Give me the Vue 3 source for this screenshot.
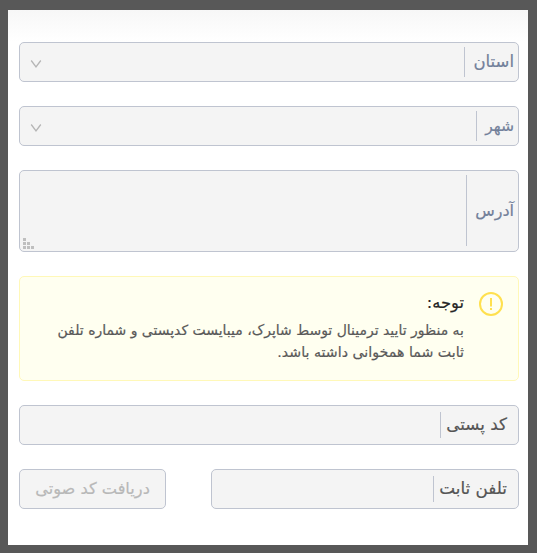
<template>
  <div class="backdrop">
    <form class="panel" dir="rtl" @submit.prevent>
      <div v-for="item in selects" :key="item.name" class="field">
        <label class="label" :class="item.name">{{ item.label }}</label>
        <div class="value"></div>
        <svg class="arrow" width="12" height="10" viewBox="0 0 12 10">
          <path d="M1.2 1.5 6 7.9l4.8-6.4" />
        </svg>
      </div>

      <div class="field area">
        <label class="label address">آدرس</label>
        <div class="value"></div>
        <svg class="grip" width="11" height="11" viewBox="0 0 11 11">
          <path d="M0 0h3v3H0zM0 4h3v3H0zM4 4h3v3H4zM0 8h3v3H0zM4 8h3v3H4zM8 8h3v3H8z" />
        </svg>
      </div>

      <div class="alert">
        <svg class="alert-icon" width="24" height="24" viewBox="0 0 24 24">
          <circle cx="12" cy="12" r="11" />
          <path d="M12 6v8.5M12 16v2" />
        </svg>
        <div class="alert-body">
          <div class="alert-title">توجه:</div>
          <div class="alert-text">
            <span class="line first">به منظور تایید ترمینال توسط شاپرک، میبایست کدپستی و شماره تلفن</span>
            <span class="line second">ثابت شما همخوانی داشته باشد.</span>
          </div>
        </div>
      </div>

      <div class="field input">
        <label class="label postal">کد پستی</label>
      </div>

      <div class="row">
        <div class="field input phone-field">
          <label class="label phone">تلفن ثابت</label>
        </div>
        <button class="voice-btn" type="button" disabled>دریافت کد صوتی</button>
      </div>
    </form>
  </div>
</template>

<script setup>
const selects = [
  { name: 'province', label: 'استان' },
  { name: 'city', label: 'شهر' },
]
</script>

<style>
body {
  margin: 0;
  background: #585858;
}
</style>

<style scoped>
.backdrop {
  box-sizing: border-box;
  width: 537px;
  height: 553px;
  padding: 10px 9px 8px 8px;
  background: #585858;
  font-family: "DejaVu Sans", sans-serif;
  -webkit-text-stroke: 0.2px;
}

.panel {
  box-sizing: border-box;
  height: 535px;
  padding: 32px 9px 36px 11px;
  display: flex;
  flex-direction: column;
  gap: 24px;
  background: linear-gradient(#f7f7f7, #fff 32px);
}

.field {
  box-sizing: border-box;
  height: 40px;
  flex-shrink: 0;
  padding: 4px;
  display: flex;
  align-items: stretch;
  position: relative;
  background: #f4f4f4;
  border: 1px solid #bfc4d0;
  border-radius: 5px;
}

.area {
  height: 82px;
  padding-bottom: 5px;
}

.label {
  box-sizing: border-box;
  display: flex;
  align-items: center;
  flex-shrink: 0;
  border-left: 1px solid #bfc4d0;
  color: #72809a;
  font-size: 16.5px;
  line-height: 20px;
  white-space: nowrap;
}

.value {
  flex: 1;
}

.province {
  width: 50px;
}

.city {
  width: 38px;
  font-size: 15.6px;
}

.address {
  width: 48px;
  font-size: 16px;
}

.arrow {
  align-self: center;
  margin: 4px 0 0 6px;
  fill: none;
  stroke: #b5b5b5;
  stroke-width: 1.3;
}

.grip {
  position: absolute;
  left: 3px;
  bottom: 2px;
  fill: #bfbfbf;
}

.alert {
  box-sizing: border-box;
  height: 105px;
  flex-shrink: 0;
  padding: 15px;
  display: flex;
  gap: 15px;
  background: #fffff0;
  border: 1px solid #fff8b8;
  border-radius: 5px;
}

.alert-icon {
  flex-shrink: 0;
  fill: none;
  stroke: #ffe04f;
  stroke-width: 2;
}

.alert-body {
  flex: 1;
}

.alert-title {
  height: 24px;
  line-height: 22px;
  color: #262626;
  font-size: 16.3px;
}

.alert-text {
  margin-top: 3px;
  color: #595959;
  font-size: 13.97px;
  line-height: 22px;
}

.line {
  display: block;
  white-space: nowrap;
}

.second {
  font-size: 14.2px;
}

.input {
  padding: 6px 11px;
}

.input .label {
  padding-bottom: 2px;
  color: #555;
  font-size: 16.8px;
}

.postal {
  width: 67px;
}

.phone {
  width: 74px;
}

.row {
  display: flex;
  justify-content: space-between;
}

.phone-field {
  width: 308px;
}

.voice-btn {
  width: 147px;
  height: 40px;
  padding: 0 0 2px;
  background: #f4f4f4;
  border: 1px solid #bfc4d0;
  border-radius: 5px;
  color: #b8b8b8;
  font-family: inherit;
  font-size: 16.2px;
  white-space: nowrap;
}
</style>
